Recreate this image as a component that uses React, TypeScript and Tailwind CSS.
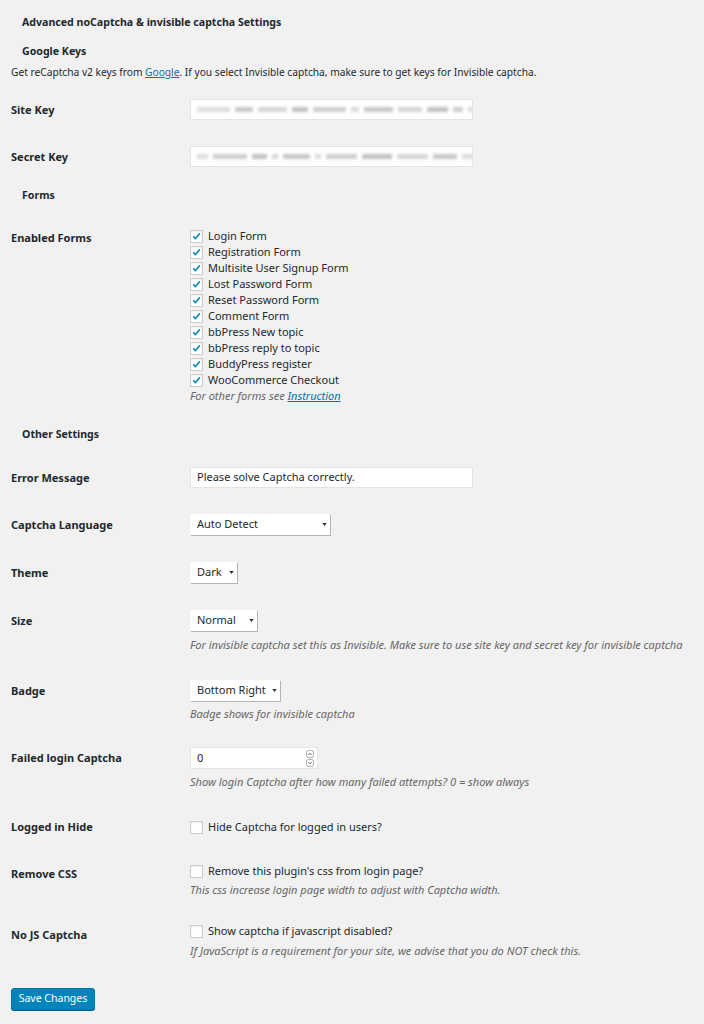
import React from "react";

const forms = [
  "Login Form",
  "Registration Form",
  "Multisite User Signup Form",
  "Lost Password Form",
  "Reset Password Form",
  "Comment Form",
  "bbPress New topic",
  "bbPress reply to topic",
  "BuddyPress register",
  "WooCommerce Checkout",
];

function Check({ on }: { on?: boolean }) {
  return (
    <span className="inline-flex h-[13px] w-[13px] shrink-0 items-center justify-center border border-[#c9ccd0] bg-white shadow-[inset_0_1px_2px_rgba(0,0,0,0.08)]">
      {on && (
        <svg viewBox="0 0 16 16" className="h-[12px] w-[12px]">
          <path d="M3.2 8.4 6.5 11.6 12.8 4.2" fill="none" stroke="#1e8cbe" strokeWidth="2.6" />
        </svg>
      )}
    </span>
  );
}

function Select({ value, className }: { value: string; className: string }) {
  return (
    <div className={`flex h-[21px] items-center justify-between bg-white pl-[7px] pr-[3px] shadow-[1px_1px_0_#b5b5b5] ${className}`}>
      <span>{value}</span>
      <svg viewBox="0 0 6 4" className="h-[3px] w-[5px]">
        <path d="M0 0h6L3 4z" fill="#333" />
      </svg>
    </div>
  );
}

function Blurred({ seed }: { seed: number }) {
  const blocks = [18, 34, 8, 26, 40, 12, 30, 22, 16, 36, 28, 10, 24];
  return (
    <div className="flex h-[21px] w-[283px] items-center gap-[5px] overflow-hidden border border-[#e4e4e4] bg-white px-[6px]">
      {blocks.map((w, i) => (
        <span
          key={i}
          className="h-[5px] shrink-0 bg-[#b9b9b9] blur-[1.5px]"
          style={{ width: ((w + seed * (i + 3)) % 34) + 6, opacity: 0.5 + ((i * seed) % 5) / 10 }}
        />
      ))}
    </div>
  );
}

function Row({ label, children, className, labelClass = "leading-[21px]" }: { label: string; children: React.ReactNode; className: string; labelClass?: string }) {
  return (
    <div className={`flex items-start ${className}`}>
      <div className={`w-[179px] shrink-0 font-bold ${labelClass}`}>{label}</div>
      <div className="flex flex-col">{children}</div>
    </div>
  );
}

function Desc({ children, className }: { children: React.ReactNode; className: string }) {
  return <p className={`italic leading-[16px] text-[#666] ${className}`}>{children}</p>;
}

function Heading({ children, className }: { children: React.ReactNode; className: string }) {
  return <h3 className={`ml-[11px] text-[10.6px] font-bold leading-[16px] ${className}`}>{children}</h3>;
}

export default function App() {
  return (
    <div className="min-h-screen bg-[#f1f1f1] px-[11px] pb-[14px] pt-[14px] font-['Noto_Sans',sans-serif] text-[11px] text-[#23282d]">
      <Heading className="">Advanced noCaptcha &amp; invisible captcha Settings</Heading>
      <Heading className="mt-[13px]">Google Keys</Heading>
      <p className="mt-[5px] text-[10.2px] leading-[16px]">
        Get reCaptcha v2 keys from <a className="text-[#0073aa] underline">Google</a>. If you select Invisible captcha, make sure to get keys for Invisible captcha.
      </p>

      <Row label="Site Key" className="mt-[19px]">
        <Blurred seed={3} />
      </Row>
      <Row label="Secret Key" className="mt-[26px]">
        <Blurred seed={7} />
      </Row>

      <Heading className="mt-[20px]">Forms</Heading>

      <Row label="Enabled Forms" className="mt-[25px]" labelClass="leading-[16px] pt-[2px]">
        {forms.map((f) => (
          <label key={f} className="flex h-[16px] items-center gap-[5px]">
            <Check on />
            <span>{f}</span>
          </label>
        ))}
        <Desc className="">
          For other forms see <a className="text-[#0073aa] underline">Instruction</a>
        </Desc>
      </Row>

      <Heading className="mt-[22px]">Other Settings</Heading>

      <Row label="Error Message" className="mt-[25px]">
        <div className="flex h-[21px] w-[283px] items-center border border-[#e4e4e4] bg-white px-[6px]">Please solve Captcha correctly.</div>
      </Row>
      <Row label="Captcha Language" className="mt-[26px]">
        <Select value="Auto Detect" className="w-[140px]" />
      </Row>
      <Row label="Theme" className="mt-[27px]">
        <Select value="Dark" className="w-[47px]" />
      </Row>
      <Row label="Size" className="mt-[27px]">
        <Select value="Normal" className="w-[67px]" />
        <Desc className="mt-[6px]">For invisible captcha set this as Invisible. Make sure to use site key and secret key for invisible captcha</Desc>
      </Row>
      <Row label="Badge" className="mt-[27px]">
        <Select value="Bottom Right" className="w-[90px]" />
        <Desc className="mt-[5px]">Badge shows for invisible captcha</Desc>
      </Row>
      <Row label="Failed login Captcha" className="mt-[25px]" labelClass="leading-[22px]">
        <div className="flex h-[22px] w-[128px] items-center justify-between border border-[#e4e4e4] bg-white pl-[6px] pr-[3px]">
          <span>0</span>
          <span className="flex flex-col gap-[1px]">
            <svg viewBox="0 0 8 8" className="h-[8px] w-[8px]"><rect x="0.5" y="0.5" width="7" height="7" rx="2" fill="#fff" stroke="#aaa" /><path d="M2.3 5 4 3.2 5.7 5" fill="none" stroke="#555" strokeWidth="0.9" /></svg>
            <svg viewBox="0 0 8 8" className="h-[8px] w-[8px]"><rect x="0.5" y="0.5" width="7" height="7" rx="2" fill="#fff" stroke="#aaa" /><path d="M2.3 3 4 4.8 5.7 3" fill="none" stroke="#555" strokeWidth="0.9" /></svg>
          </span>
        </div>
        <Desc className="mt-[5px]">Show login Captcha after how many failed attempts? 0 = show always</Desc>
      </Row>

      <Row label="Logged in Hide" className="mt-[29px]" labelClass="leading-[16px]">
        <label className="flex h-[16px] items-center gap-[5px]">
          <Check />
          <span>Hide Captcha for logged in users?</span>
        </label>
      </Row>
      <Row label="Remove CSS" className="mt-[28px]" labelClass="leading-[16px] pt-[3px]">
        <label className="flex h-[16px] items-center gap-[5px]">
          <Check />
          <span>Remove this plugin's css from login page?</span>
        </label>
        <Desc className="mt-[3px]">This css increase login page width to adjust with Captcha width.</Desc>
      </Row>
      <Row label="No JS Captcha" className="mt-[25px]" labelClass="leading-[16px] pt-[4px]">
        <label className="flex h-[16px] items-center gap-[5px]">
          <Check />
          <span>Show captcha if javascript disabled?</span>
        </label>
        <Desc className="mt-[4px]">If JavaScript is a requirement for your site, we advise that you do NOT check this.</Desc>
      </Row>

      <button className="mt-[29px] flex h-[22px] w-[84px] items-center justify-center rounded-[3px] border border-[#0073aa] bg-[#0085ba] text-[10.5px] text-white shadow-[0_1px_0_#006799]">
        Save Changes
      </button>
    </div>
  );
}
